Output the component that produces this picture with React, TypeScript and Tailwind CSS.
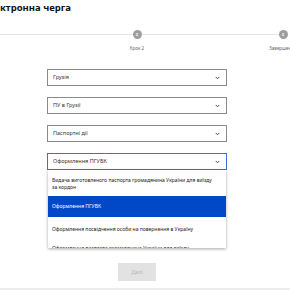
import React from "react";

function Chevron() {
  return (
    <svg width="5" height="4" viewBox="0 0 10 8" className="shrink-0">
      <path d="M1.5 2 L5 5.5 L8.5 2" fill="none" stroke="#333" strokeWidth="1.8" />
    </svg>
  );
}

function Field({ label, focused = false }: { label: string; focused?: boolean }) {
  return (
    <div
      className={
        "h-[17px] w-[180px] flex items-center justify-between pl-[5px] pr-[6px] bg-white border " +
        (focused ? "border-[#3d6fd6]" : "border-[#8a8a8a]")
      }
    >
      <span className="text-[5.5px] leading-[7px] text-[#333]">{label}</span>
      <Chevron />
    </div>
  );
}

function Step({ n, label, left, right }: { n?: number; label: string; left: boolean; right: boolean }) {
  return (
    <div className="w-[146px] shrink-0 flex flex-col items-center">
      <div className="w-full flex items-center h-[9px]">
        <div className={"flex-1 h-[1.5px] " + (left ? "bg-[#e3e3e3]" : "bg-transparent")} />
        <div className="w-[9px] h-[9px] rounded-full bg-[#9e9e9e] flex items-center justify-center">
          <span className="text-[4px] leading-[4px] text-white font-bold">{n}</span>
        </div>
        <div className={"flex-1 h-[1.5px] " + (right ? "bg-[#e3e3e3]" : "bg-transparent")} />
      </div>
      <div className="mt-[6px] h-[6px] text-[4.5px] leading-[6px] text-[#666] whitespace-nowrap">{label}</div>
    </div>
  );
}

export default function App() {
  return (
    <div
      className="w-[290px] h-[290px] overflow-hidden bg-white flex flex-col"
      style={{ fontFamily: '"Noto Sans", "DejaVu Sans", sans-serif' }}
    >
      <div className="pt-[2px] text-[9.5px] leading-[12px] font-bold text-[#111] whitespace-nowrap">
        ктронна черга
      </div>
      <div className="mt-[16px] flex ml-[-82px]">
        <Step label="" left={false} right={true} />
        <Step n={2} label="Крок 2" left={true} right={true} />
        <Step n={3} label="Завершення" left={true} right={false} />
      </div>
      <div className="ml-[47px] mt-[18px] flex flex-col gap-[11px] w-[180px]">
        <Field label="Грузія" />
        <Field label="ПУ в Грузії" />
        <Field label="Паспортні дії" />
        <div className="relative">
          <Field label="Оформлення ПГУВК" focused />
          <div className="absolute left-[1px] top-full w-[178px] h-[78px] overflow-hidden bg-white shadow-[0_1px_3px_rgba(0,0,0,0.35)] z-10">
            <div className="pl-[4px] pt-[7px] pb-[5px] text-[5px] leading-[7px] text-[#222] whitespace-nowrap">
              Видача виготовленого паспорта громадянина України для виїзду
              <br />
              за кордон
            </div>
            <div className="pl-[4px] py-[7px] text-[5px] leading-[7px] text-white bg-[#0048c8]">
              Оформлення ПГУВК
            </div>
            <div className="pl-[4px] pt-[9px] pb-[5px] text-[5px] leading-[7px] text-[#222]">
              Оформлення посвідчення особи на повернення в Україну
            </div>
            <div className="pl-[4px] pt-[7px] pb-[5px] text-[5px] leading-[7px] text-[#222] whitespace-nowrap">
              Оформлення паспорта громадянина України для виїзду
            </div>
          </div>
        </div>
        <div className="mt-[82px] self-center w-[38px] h-[18px] bg-[#e2e2e2] flex items-center justify-center">
          <span className="text-[5.5px] leading-[7px] text-[#b8b8b8]">Далі</span>
        </div>
      </div>
      <div className="mt-auto h-[2px] bg-[#ececec]" />
    </div>
  );
}
